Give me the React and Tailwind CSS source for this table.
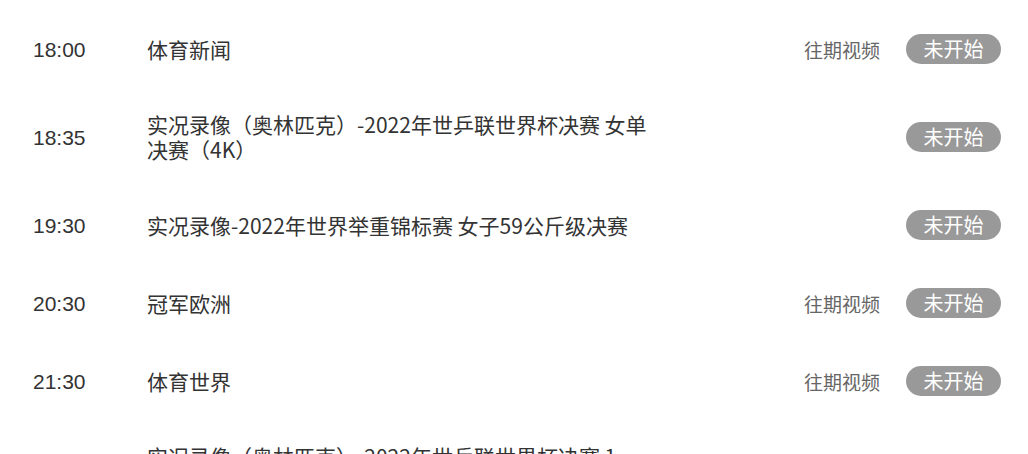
import React from "react";

const rows = [
  { time: "18:00", title: "体育新闻", replay: true },
  { time: "18:35", title: "实况录像（奥林匹克）-2022年世乒联世界杯决赛 女单决赛（4K）", replay: false },
  { time: "19:30", title: "实况录像-2022年世界举重锦标赛 女子59公斤级决赛", replay: false },
  { time: "20:30", title: "冠军欧洲", replay: true },
  { time: "21:30", title: "体育世界", replay: true },
  { time: "22:00", lines: ["实况录像（奥林匹克）-2022年世乒联世界杯决赛 1", "/4决赛（4K）"], replay: false },
];

export default function App() {
  return (
    <div
      className="w-[1028px] h-[454px] overflow-hidden bg-white pt-[10px]"
      style={{ fontFamily: '"Noto Sans CJK SC", "Liberation Sans", sans-serif' }}
    >
      {rows.map((r, i) => (
        <div key={i} className="flex items-center py-[24px] pl-[33px] pr-[27px]">
          <div className="w-[114px] shrink-0 text-[21px] leading-[25px] text-[#333] font-['Liberation_Sans',sans-serif]">
            {r.time}
          </div>
          <div className="w-[512px] shrink-0 text-[21px] leading-[25px] text-[#333]">
            {r.lines
              ? r.lines.map((l, j) => (
                  <div key={j}>{l}</div>
                ))
              : r.title}
          </div>
          <div className="flex-1" />
          <div className="flex items-center gap-[26px]">
            {r.replay && (
              <span className="text-[19px] leading-[25px] text-[#666]">往期视频</span>
            )}
            <span className="flex h-[30px] w-[95px] items-center justify-center rounded-full bg-[#999] text-[20px] leading-[30px] text-white">
              未开始
            </span>
          </div>
        </div>
      ))}
    </div>
  );
}
